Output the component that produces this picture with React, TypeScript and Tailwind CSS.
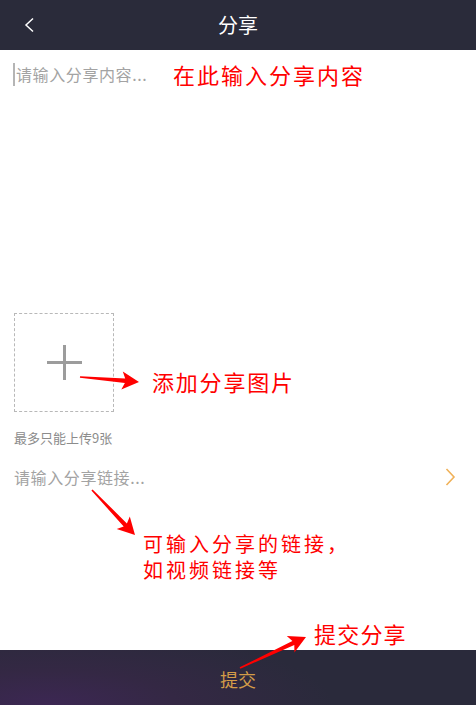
import React from 'react';

const FONT = { fontFamily: '"Noto Sans CJK SC", "Noto Sans", sans-serif' };

// tapered red annotation arrow, from tail to tip
function arrowPoints(tx: number, ty: number, px: number, py: number) {
  const dx = px - tx;
  const dy = py - ty;
  const len = Math.hypot(dx, dy);
  const ux = dx / len;
  const uy = dy / len;
  const nx = -uy;
  const ny = ux;
  const head = 17;
  const hw = 9;
  const bx = px - ux * head;
  const by = py - uy * head;
  const pts: [number, number][] = [
    [tx + nx * 0.8, ty + ny * 0.8],
    [bx + nx * 2.2 + ux * 3, by + ny * 2.2 + uy * 3],
    [bx + nx * hw, by + ny * hw],
    [px, py],
    [bx - nx * hw, by - ny * hw],
    [bx - nx * 2.2 + ux * 3, by - ny * 2.2 + uy * 3],
    [tx - nx * 0.8, ty - ny * 0.8],
  ];
  return pts.map(([x, y]) => `${x.toFixed(1)},${y.toFixed(1)}`).join(' ');
}

function Arrows() {
  return (
    <svg className="absolute inset-0 pointer-events-none" width="476" height="705" viewBox="0 0 476 705">
      <polygon points={arrowPoints(80, 377, 139, 382)} fill="#ff0000" />
      <polygon points={arrowPoints(92, 490, 135, 535)} fill="#ff0000" />
      <polygon points={arrowPoints(240, 668, 306, 637)} fill="#ff0000" />
    </svg>
  );
}

export default function App() {
  return (
    <div className="relative w-[476px] h-[705px] flex flex-col bg-white overflow-hidden" style={FONT}>
      {/* 顶部导航 */}
      <div className="h-[50px] shrink-0 bg-[#2a2b3a] flex items-center relative">
        <svg className="ml-[23px]" width="12" height="16" viewBox="0 0 12 16">
          <path d="M10 1.5 L3 8 L10 14.5" fill="none" stroke="#ffffff" strokeWidth="1.5" />
        </svg>
        <div className="absolute inset-0 flex items-center justify-center text-white text-[20px] leading-none pointer-events-none">
          分享
        </div>
      </div>

      {/* 内容输入 */}
      <div className="h-[263px] shrink-0 pt-[12px] pl-[13px] flex items-start">
        <div className="flex items-center h-[24px]">
          <span className="w-[2px] h-[23px] bg-[#b5b5b5]" />
          <span className="w-[158px] pl-[1px] text-[16px] tracking-[0.6px] text-[#a3a3a3] leading-[24px]">请输入分享内容...</span>
          <span className="text-[22px] tracking-[2px] text-[#ff0000] leading-[24px]">在此输入分享内容</span>
        </div>
      </div>

      {/* 图片 */}
      <div className="flex items-center pl-[14px]">
        <div className="w-[100px] h-[99px] border border-dashed border-[#b8b8b8] flex items-center justify-center relative">
          <div className="absolute w-[35px] h-[3px] bg-[#9c9c9c]" />
          <div className="absolute w-[3px] h-[35px] bg-[#9c9c9c]" />
        </div>
        <span className="ml-[38px] mt-[36px] text-[22px] tracking-[1.8px] text-[#ff0000] leading-[24px]">添加分享图片</span>
      </div>
      <div className="mt-[17px] pl-[14px] text-[13px] text-[#8c8c8c] leading-[18px]">最多只能上传9张</div>

      {/* 链接 */}
      <div className="mt-[18px] pl-[14px] pr-[20px] h-[24px] flex items-center justify-between">
        <span className="text-[16px] tracking-[0.6px] text-[#a3a3a3] leading-[24px]">请输入分享链接...</span>
        <svg width="11" height="18" viewBox="0 0 11 18">
          <path d="M1.5 1 L9 9 L1.5 17" fill="none" stroke="#f0b158" strokeWidth="1.6" />
        </svg>
      </div>

      <div className="mt-[42px] pl-[143px] text-[20px] tracking-[3px] text-[#ff0000] leading-[26px]">
        <div>可输入分享的链接，</div>
        <div>如视频链接等</div>
      </div>

      <div className="flex-1 flex items-end pb-[4px] pl-[314px]">
        <span className="text-[22px] tracking-[1.2px] text-[#ff0000] leading-[26px]">提交分享</span>
      </div>

      {/* 底部提交 */}
      <div className="h-[55px] shrink-0 flex items-center justify-center bg-[radial-gradient(ellipse_60%_140%_at_10%_100%,#3c2753_0%,#342844_45%,#2a2a3b_100%)]">
        <span className="text-[18px] text-[#d39c48] leading-none pt-[2px]">提交</span>
      </div>

      <Arrows />
    </div>
  );
}
